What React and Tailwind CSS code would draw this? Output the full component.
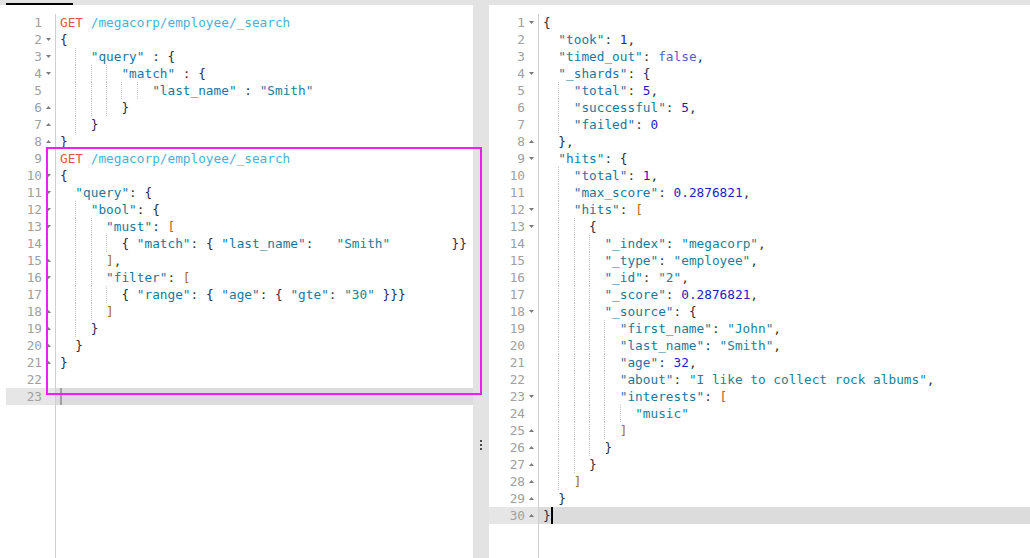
// Console-style two-pane editor: request on the left, response on the right
import React from 'react';

const leftLines = [
  'GET /megacorp/employee/_search',
  '{',
  '    "query" : {',
  '        "match" : {',
  '            "last_name" : "Smith"',
  '        }',
  '    }',
  '}',
  'GET /megacorp/employee/_search',
  '{',
  '  "query": {',
  '    "bool": {',
  '      "must": [',
  '        { "match": { "last_name":   "Smith"        }}',
  '      ],',
  '      "filter": [',
  '        { "range": { "age": { "gte": "30" }}}',
  '      ]',
  '    }',
  '  }',
  '}',
  '',
  '',
];
const leftOpen = [2, 3, 4, 10, 11, 12, 13, 16];
const leftClose = [6, 7, 8, 15, 18, 19, 20, 21];

const rightLines = [
  '{',
  '  "took": 1,',
  '  "timed_out": false,',
  '  "_shards": {',
  '    "total": 5,',
  '    "successful": 5,',
  '    "failed": 0',
  '  },',
  '  "hits": {',
  '    "total": 1,',
  '    "max_score": 0.2876821,',
  '    "hits": [',
  '      {',
  '        "_index": "megacorp",',
  '        "_type": "employee",',
  '        "_id": "2",',
  '        "_score": 0.2876821,',
  '        "_source": {',
  '          "first_name": "John",',
  '          "last_name": "Smith",',
  '          "age": 32,',
  '          "about": "I like to collect rock albums",',
  '          "interests": [',
  '            "music"',
  '          ]',
  '        }',
  '      }',
  '    ]',
  '  }',
  '}',
];
const rightOpen = [1, 4, 9, 12, 13, 18, 23];
const rightClose = [8, 25, 26, 27, 28, 29, 30];

// guide offsets, written out so tailwind picks them up
const guideLeft = {
  2: 'left-[2ch]',
  4: 'left-[4ch]',
  6: 'left-[6ch]',
  8: 'left-[8ch]',
  10: 'left-[10ch]',
};

const tokenRe = /("(?:[^"\\]|\\.)*")(\s*:)?|(-?\d+(?:\.\d+)?)|(true|false|null)|([{}])|([\[\]])|(GET|POST|PUT|DELETE)|(\/\S+)|(\s+)|(.)/g;

function tokenize(line) {
  const out = [];
  let m;
  let i = 0;
  tokenRe.lastIndex = 0;
  while ((m = tokenRe.exec(line)) !== null) {
    if (m[1]) {
      if (m[2]) {
        out.push(<span key={i++} className="text-[#1a78a0]">{m[1]}</span>);
        out.push(<span key={i++} className="text-[#333]">{m[2]}</span>);
      } else {
        out.push(<span key={i++} className="text-[#218197]">{m[1]}</span>);
      }
    } else if (m[3]) out.push(<span key={i++} className="text-[#1c1cc8]">{m[3]}</span>);
    else if (m[4]) out.push(<span key={i++} className="text-[#5a5ad2]">{m[4]}</span>);
    else if (m[5]) out.push(<span key={i++} className="text-[#2c2c44]">{m[5]}</span>);
    else if (m[6]) out.push(<span key={i++} className="text-[#b06c0c]">{m[6]}</span>);
    else if (m[7]) out.push(<span key={i++} className="text-[#e2564a]">{m[7]}</span>);
    else if (m[8]) out.push(<span key={i++} className="text-[#4eaed9]">{m[8]}</span>);
    else out.push(<span key={i++} className="text-[#333]">{m[0]}</span>);
  }
  return out;
}

const Fold = ({ dir }) => (
  <svg width="5" height="3" viewBox="0 0 5 3" className="ml-[4px]">
    {dir === 'down' ? (
      <polygon points="0,0 5,0 2.5,3" fill="#7a7a7a" />
    ) : (
      <polygon points="0,3 5,3 2.5,0" fill="#7a7a7a" />
    )}
  </svg>
);

const Editor = ({ lines, open, close, active, caret, className }) => (
  <div className={`flex flex-col pt-[9px] bg-white ${className}`}>
    <div className="flex flex-1 font-['DejaVu_Sans_Mono',monospace] text-[12.75px] leading-[17px]">
      {/* gutter */}
      <div className="w-[50px] shrink-0 border-r border-[#cfcfcf]">
        {lines.map((_, idx) => {
          const n = idx + 1;
          return (
            <div
              key={n}
              className={`flex h-[17px] items-center ${n === active ? 'bg-[#e6e6e6]' : ''}`}
            >
              <span className="w-[36px] text-right text-[#a0a0a0]">{n}</span>
              {open.includes(n) && <Fold dir="down" />}
              {close.includes(n) && <Fold dir="up" />}
            </div>
          );
        })}
      </div>
      {/* code */}
      <div className="flex-1 overflow-hidden">
        {lines.map((line, idx) => {
          const n = idx + 1;
          const indent = line.length - line.trimStart().length;
          const guides = [];
          for (let c = 2; c <= indent - 2; c += 2) guides.push(c);
          return (
            <div
              key={n}
              className={`h-[17px] pl-[4px] ${n === active ? 'bg-[#dcdcdc]' : ''}`}
            >
              <div className="relative h-full whitespace-pre">
                {guides.map((c) => (
                  <span
                    key={c}
                    className={`absolute top-0 h-full border-l border-dotted border-[#c2c2c2] ${guideLeft[c]}`}
                  />
                ))}
                {tokenize(line)}
                {n === active && (
                  <span
                    className={`absolute top-0 h-[17px] w-[2px] ${
                      caret === 'dim' ? 'left-0 bg-[#a0a0a0]' : 'left-[1ch] bg-black'
                    }`}
                  />
                )}
              </div>
            </div>
          );
        })}
      </div>
    </div>
  </div>
);

export default function App() {
  return (
    <div className="relative flex h-[558px] w-[1030px] flex-col overflow-hidden bg-white">
      {/* tab strip */}
      <div className="h-[5px] shrink-0 bg-[#e3e3e3]">
        <div className="ml-[6px] mt-[3px] h-[2px] w-[67px] bg-black" />
      </div>

      <div className="flex flex-1">
        <div className="w-[6px] shrink-0 bg-white" />
        <Editor
          lines={leftLines}
          open={leftOpen}
          close={leftClose}
          active={23}
          caret="dim"
          className="w-[467px] shrink-0"
        />
        {/* splitter */}
        <div className="flex w-[16px] shrink-0 flex-col items-center gap-[2px] bg-[#e3e3e3] pt-[435px]">
          <span className="h-[2px] w-[2px] bg-[#4a4a4a]" />
          <span className="h-[2px] w-[2px] bg-[#4a4a4a]" />
          <span className="h-[2px] w-[2px] bg-[#4a4a4a]" />
        </div>
        <Editor
          lines={rightLines}
          open={rightOpen}
          close={rightClose}
          active={30}
          caret="solid"
          className="flex-1"
        />
      </div>

      {/* selection outline drawn over the second request */}
      <div className="pointer-events-none absolute left-[46px] top-[147px] h-[248px] w-[436px] border-2 border-[#f01ef0]" />
    </div>
  );
}
